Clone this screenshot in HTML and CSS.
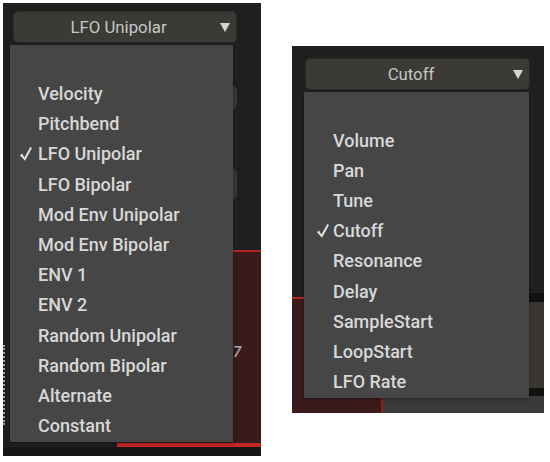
FILE: index.html
```html
<!DOCTYPE html>
<html>
<head>
<meta charset="utf-8">
<link rel="stylesheet" href="styles.css">
</head>
<body>
<div class="stage">
  <section class="panel panel-left">
    <div class="backdrop">
      <div class="select select-left">
        <span class="select-label">LFO Unipolar</span>
        <svg class="arrow" width="10" height="9" viewBox="0 0 10 9"><polygon points="0,0 10,0 5,9"/></svg>
      </div>
      <div class="knob knob-a"></div>
      <div class="knob knob-b"></div>
      <div class="lower-left">
        <div class="ticks"></div>
        <div class="redblock"><span class="digit">7</span></div>
      </div>
      <div class="floor"></div>
    </div>
    <ul class="menu menu-left">
      <li class="item"><span class="mark"></span>Velocity</li>
      <li class="item"><span class="mark"></span>Pitchbend</li>
      <li class="item"><span class="mark"><svg class="check" width="12" height="14" viewBox="0 0 12 14"><path d="M0 8.2 L2.1 6.6 L4.4 10.4 L10.3 0 L12 1.1 L5 13.8 Z"/></svg></span>LFO Unipolar</li>
      <li class="item"><span class="mark"></span>LFO Bipolar</li>
      <li class="item"><span class="mark"></span>Mod Env Unipolar</li>
      <li class="item"><span class="mark"></span>Mod Env Bipolar</li>
      <li class="item"><span class="mark"></span>ENV 1</li>
      <li class="item"><span class="mark"></span>ENV 2</li>
      <li class="item"><span class="mark"></span>Random Unipolar</li>
      <li class="item"><span class="mark"></span>Random Bipolar</li>
      <li class="item"><span class="mark"></span>Alternate</li>
      <li class="item"><span class="mark"></span>Constant</li>
    </ul>
  </section>

  <section class="panel panel-right">
    <div class="backdrop">
      <div class="select select-right">
        <span class="select-label">Cutoff</span>
        <svg class="arrow" width="10" height="9" viewBox="0 0 10 9"><polygon points="0,0 10,0 5,9"/></svg>
      </div>
      <div class="lower-right">
        <div class="redzone"></div>
        <div class="rightzone">
          <div class="band"></div>
          <div class="box-a"></div>
          <div class="band band-b"></div>
          <div class="box-b"></div>
        </div>
      </div>
    </div>
    <ul class="menu menu-right">
      <li class="item"><span class="mark"></span>Volume</li>
      <li class="item"><span class="mark"></span>Pan</li>
      <li class="item"><span class="mark"></span>Tune</li>
      <li class="item"><span class="mark"><svg class="check" width="12" height="14" viewBox="0 0 12 14"><path d="M0 8.2 L2.1 6.6 L4.4 10.4 L10.3 0 L12 1.1 L5 13.8 Z"/></svg></span>Cutoff</li>
      <li class="item"><span class="mark"></span>Resonance</li>
      <li class="item"><span class="mark"></span>Delay</li>
      <li class="item"><span class="mark"></span>SampleStart</li>
      <li class="item"><span class="mark"></span>LoopStart</li>
      <li class="item"><span class="mark"></span>LFO Rate</li>
    </ul>
  </section>
</div>
</body>
</html>
```

FILE: styles.css
```css
* { box-sizing: border-box; }

html, body {
  margin: 0;
  padding: 0;
  background: #ffffff;
}

body {
  font-family: Roboto, "Liberation Sans", sans-serif;
  width: 550px;
  height: 462px;
  overflow: hidden;
}

.stage {
  display: flex;
  align-items: flex-start;
  gap: 31px;
  padding: 3px 0 0 3px;
}

.panel {
  display: grid;
  background: #1f1f1f;
}

.panel > * {
  grid-area: 1 / 1;
}

.panel-left {
  width: 258px;
  height: 453px;
}

.panel-right {
  width: 252px;
  height: 367px;
  margin-top: 43px;
}

.backdrop {
  display: flex;
  flex-direction: column;
  height: 100%;
}

/* select buttons */
.select {
  display: flex;
  align-items: center;
  height: 32px;
  background: #3c3a35;
  border: 1px solid #2c2b28;
  border-radius: 5px;
  color: #c6c6c6;
  font-size: 16.8px;
  font-weight: 400;
  flex: none;
}

.select-left {
  width: 224px;
  margin: 8px 0 0 10px;
}

.select-right {
  width: 225px;
  margin: 12px 0 0 13px;
}

.select-label {
  flex: 1;
  text-align: center;
}

.arrow {
  flex: none;
  margin: 0 6px 0 -3px;
  fill: #d4d4d4;
}

/* left backdrop decorations */
.knob {
  align-self: flex-end;
  width: 28px;
  background: #383838;
  border-radius: 0 6px 6px 0;
  margin-right: 24px;
  flex: none;
}

.knob-a {
  height: 25px;
  margin-top: 42px;
}

.knob-b {
  height: 32px;
  margin-top: 58px;
}

.lower-left {
  display: flex;
  height: 197px;
  margin-top: 50px;
  flex: none;
}

.ticks {
  width: 3px;
  height: 80px;
  margin-top: 95px;
  border-left: 2px dotted #9a9a9a;
}

.redblock {
  margin-left: auto;
  width: 144px;
  background: #3a1b1c;
  border-top: 2px solid #b52323;
  border-bottom: 4px solid #c42626;
  padding: 90px 0 0 116px;
}

.digit {
  color: #a8a8a8;
  font-size: 15px;
  font-style: italic;
  font-weight: 500;
}

.floor {
  flex: 1;
  background: #161616;
}

/* right backdrop decorations */
.lower-right {
  display: flex;
  margin-top: 203px;
  flex: 1;
}

.redzone {
  width: 89px;
  margin-top: 4px;
  background: #3a1b1c;
  border-top: 2px solid #b52323;
}

.rightzone {
  flex: 1;
  display: flex;
  flex-direction: column;
  border-left: 2px solid #9a1d1d;
}

.band {
  height: 9px;
  background: #121212;
}

.band-b {
  height: 8px;
}

.box-a {
  height: 86px;
  background: #3a3733;
}

.box-b {
  flex: 1;
  background: #3b3a38;
}

/* menus */
.menu {
  list-style: none;
  margin: 0;
  align-self: start;
  background: #464646;
  box-shadow: 0 1px 3px rgba(0, 0, 0, 0.4);
}

.menu-left {
  width: 223px;
  margin: 42px 0 0 7px;
  padding: 33.5px 0 1.5px 0;
}

.menu-right {
  width: 225px;
  margin: 46px 0 0 12px;
  padding: 33px 0 1px 0;
}

.item {
  display: flex;
  align-items: center;
  height: 30.2px;
  color: #d8d8d8;
  font-size: 18px;
  font-weight: 500;
  white-space: nowrap;
}

.mark {
  flex: none;
  display: flex;
  align-items: center;
  height: 100%;
}

.menu-left .mark {
  width: 28px;
  padding-left: 10px;
}

.menu-right .mark {
  width: 29px;
  padding-left: 13px;
}

.check {
  fill: #e2e2e2;
}
```
